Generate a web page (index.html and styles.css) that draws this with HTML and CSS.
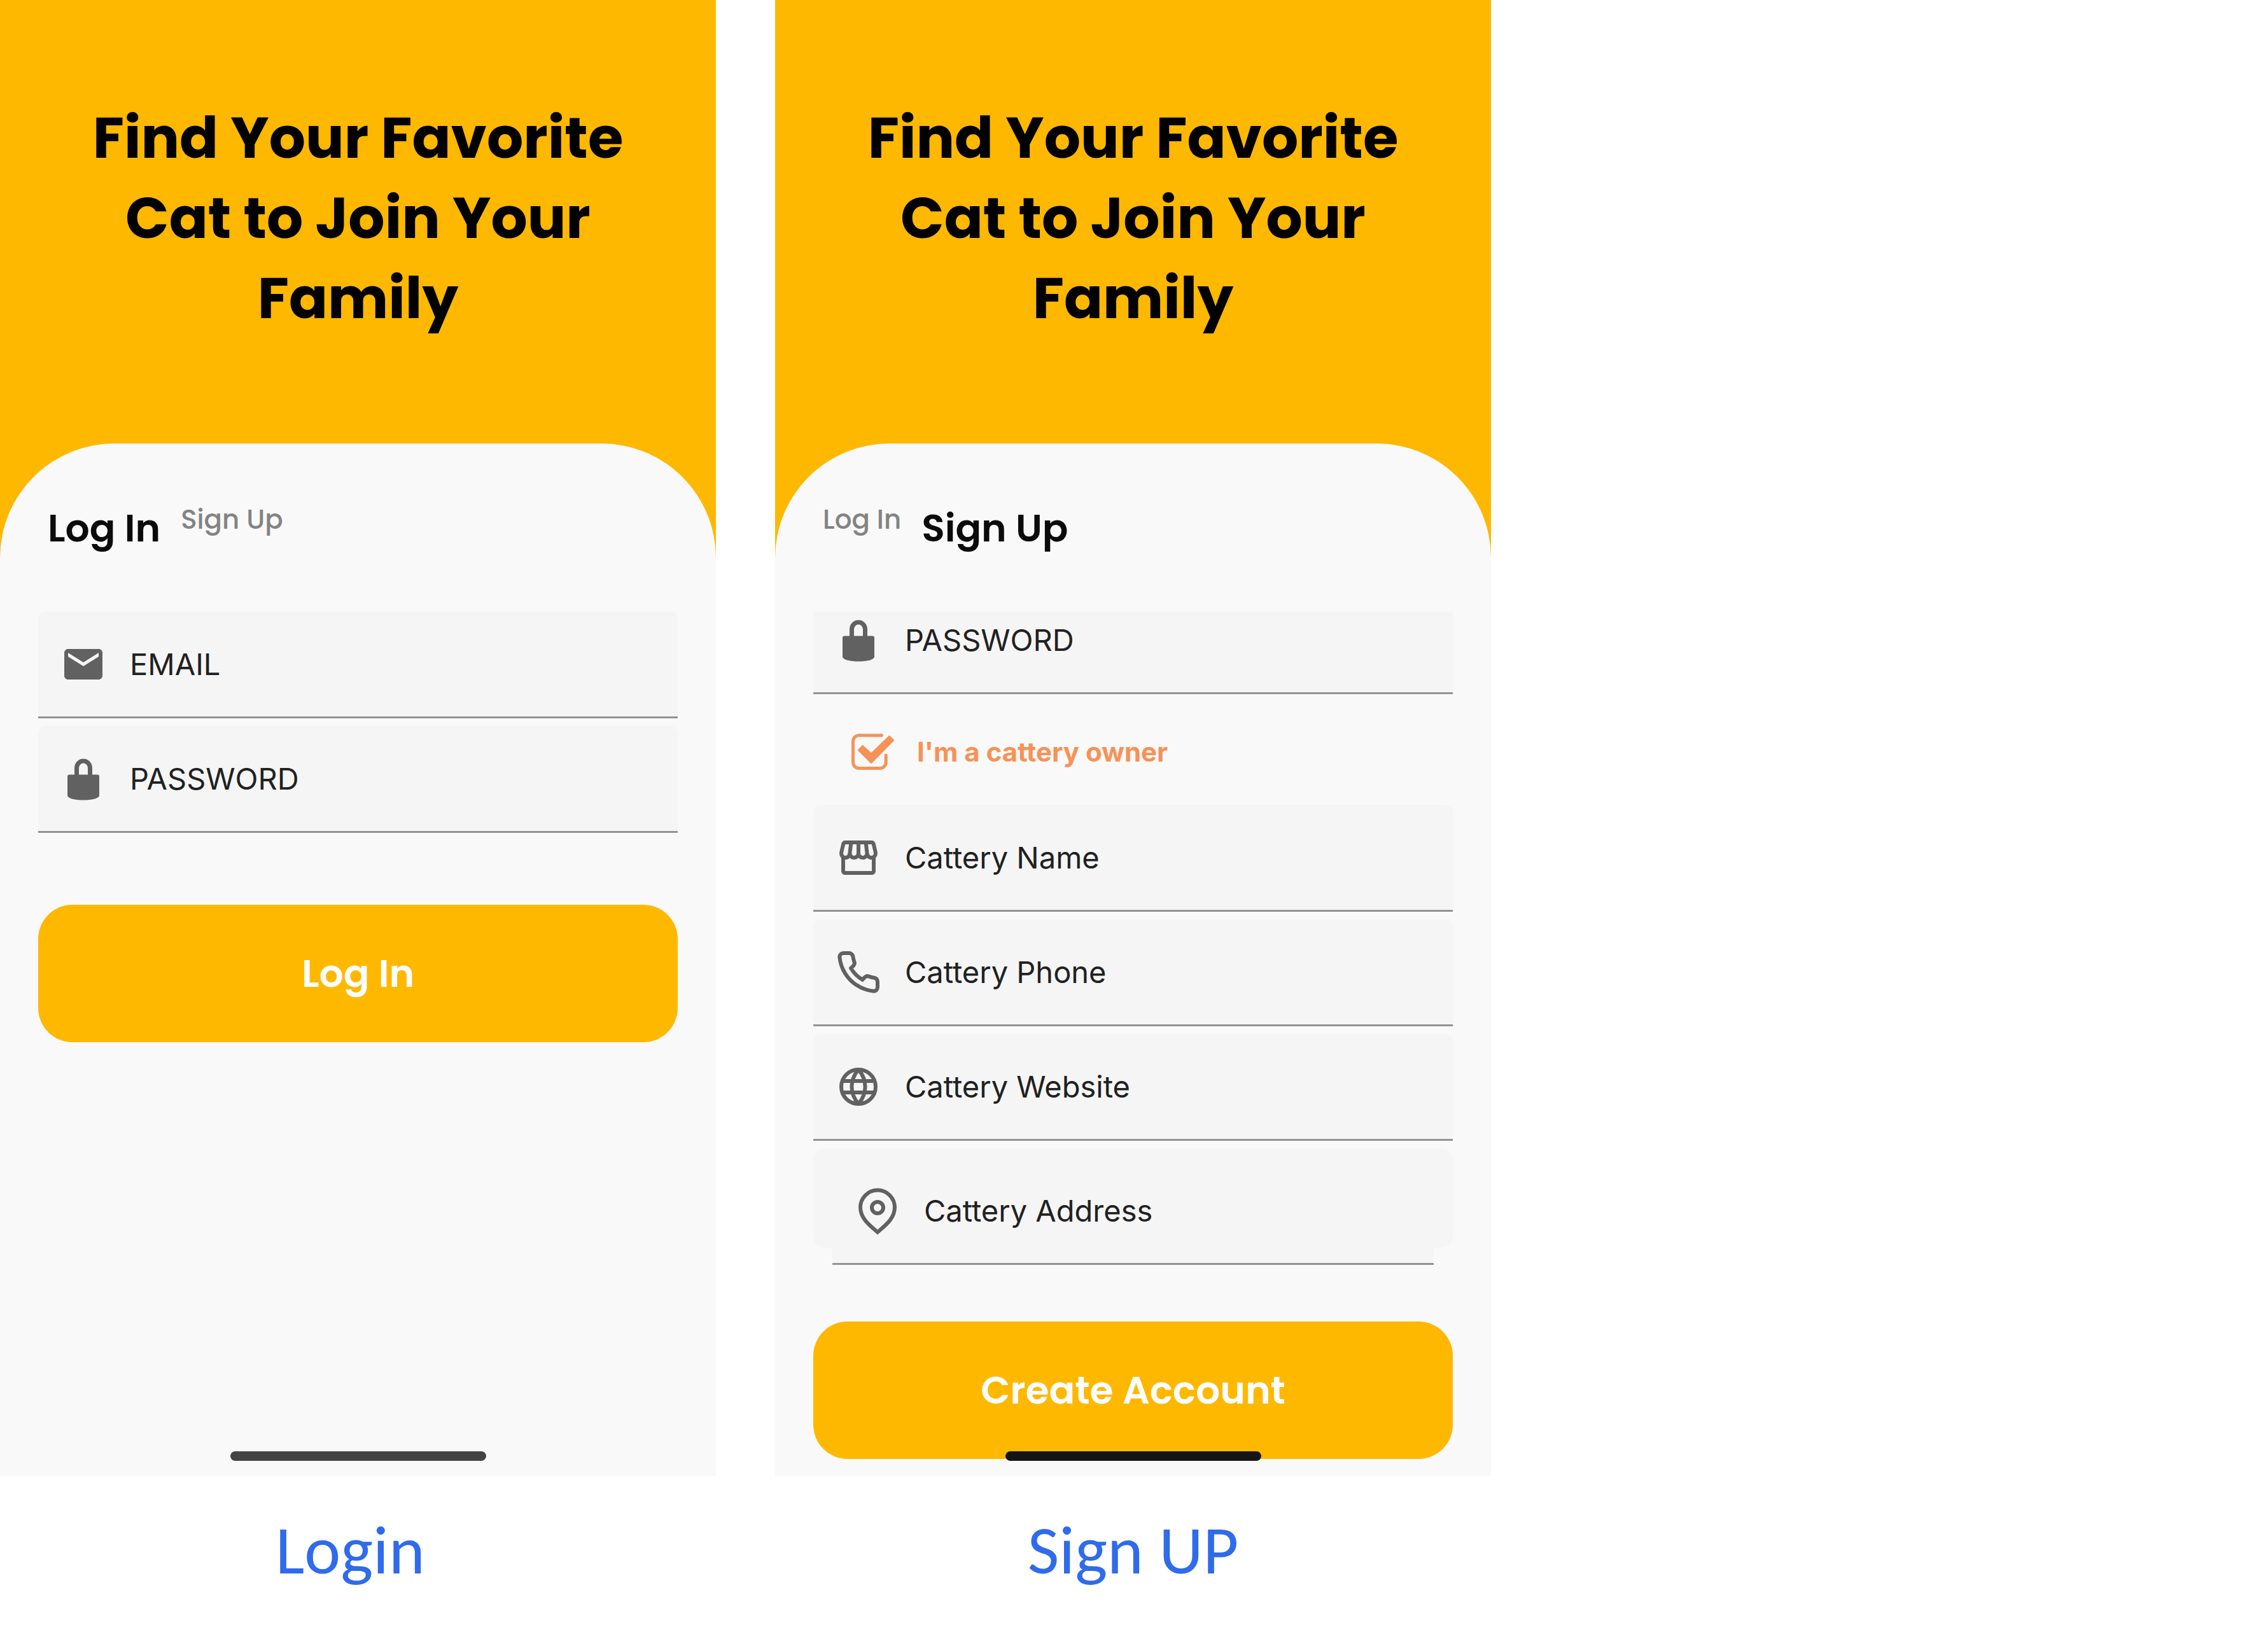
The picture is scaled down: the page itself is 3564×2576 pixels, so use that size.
FILE: index.html
```html
<!DOCTYPE html>
<html lang="en">
<head>
<meta charset="utf-8">
<meta name="viewport" content="width=device-width, initial-scale=1">
<title>Cattery - Login and Sign Up</title>
<link rel="stylesheet" href="styles.css">
</head>
<body>
<svg class="sprite" aria-hidden="true">
  <symbol id="icon-lock" viewBox="0 0 72 72">
    <path d="M25.500 32V19a10.500 11 0 0 1 21 0v13" fill="none" stroke="currentColor" stroke-width="7"/>
    <path d="M14 29.500h44a3 3 0 0 1 3 3V62c0 5-12 7.500-25 7.500S11 67 11 62V32.500a3 3 0 0 1 3-3z" fill="currentColor"/>
  </symbol>
</svg>
<main class="board">
  <figure class="screen">
    <section class="phone" aria-label="Login screen">
      <h1 class="hero">Find Your Favorite Cat to Join Your Family</h1>
      <div class="card">
        <nav class="tabs">
          <a class="tab tab-active" href="#login">Log In</a>
          <a class="tab" href="#signup">Sign Up</a>
        </nav>
        <form class="form">
          <div class="fields">
            <label class="field" aria-label="Email">
              <svg class="icon" viewBox="0 0 24 24" aria-hidden="true"><path fill="currentColor" d="M20 4H4c-1.100 0-2 .9-2 2v12c0 1.100.9 2 2 2h16c1.100 0 2-.9 2-2V6c0-1.100-.9-2-2-2zm0 4l-8 5-8-5V6l8 5 8-5v2z"/></svg>
              <input class="input" type="email" placeholder="EMAIL">
            </label>
            <label class="field" aria-label="Password">
              <svg class="icon" aria-hidden="true"><use href="#icon-lock"/></svg>
              <input class="input" type="password" placeholder="PASSWORD">
            </label>
          </div>
          <button class="submit" type="button">Log In</button>
        </form>
      </div>
      <span class="home-bar"></span>
    </section>
    <figcaption class="caption">Login </figcaption>
  </figure>

  <figure class="screen">
    <section class="phone" aria-label="Sign up screen">
      <h1 class="hero">Find Your Favorite Cat to Join Your Family</h1>
      <div class="card">
        <nav class="tabs">
          <a class="tab" href="#login">Log In</a>
          <a class="tab tab-active" href="#signup">Sign Up</a>
        </nav>
        <form class="form">
          <div class="fields fields-scrolled">
            <label class="field" aria-label="Password">
              <svg class="icon" aria-hidden="true"><use href="#icon-lock"/></svg>
              <input class="input" type="password" placeholder="PASSWORD">
            </label>
            <label class="owner">
              <span class="check">
                <input class="check-input" type="checkbox" checked>
                <svg class="check-mark" viewBox="0 0 72 60" aria-hidden="true">
                  <path d="M48.500 3.800H13a9.500 9.500 0 0 0-9.500 9.500v32.700a9.500 9.500 0 0 0 9.500 9.500h32.700a9.500 9.500 0 0 0 9.500-9.500V35" fill="none" stroke="currentColor" stroke-width="5" stroke-linecap="round"/>
                  <path d="M12.500 27l6-6.500L32 33 60.500 5.500l6 6L32 46.500z" fill="currentColor" stroke="currentColor" stroke-width="3" stroke-linejoin="round"/>
                </svg>
              </span>
              <span>I'm a cattery owner</span>
            </label>
            <label class="field" aria-label="Cattery Name">
              <svg class="icon" viewBox="0 0 24 24" aria-hidden="true"><path fill="currentColor" d="M21.900 8.890l-1.050-4.370c-.22-.9-1-1.520-1.910-1.520H5.050c-.9 0-1.690.63-1.900 1.520L2.100 8.890c-.24 1.020-.02 2.060.62 2.880.08.11.19.19.28.29V19c0 1.100.9 2 2 2h14c1.100 0 2-.9 2-2v-6.940c.09-.09.2-.18.28-.28.64-.82.87-1.870.62-2.890zm-2.990-3.900l1.050 4.370c.1.42.01.84-.25 1.170-.14.18-.44.47-.94.47-.61 0-1.140-.49-1.210-1.140L16.980 5l1.930-.01zM13 5h1.960l.54 4.520c.05.39-.07.78-.33 1.070-.22.26-.54.41-.95.41-.67 0-1.220-.59-1.220-1.310V5zM8.490 9.520L9.040 5H11v4.690c0 .72-.55 1.310-1.290 1.310-.34 0-.65-.15-.89-.41-.25-.29-.37-.68-.33-1.070zm-4.450-.16L5.050 5h1.970l-.58 4.860c-.08.65-.6 1.140-1.210 1.140-.49 0-.8-.29-.93-.47-.27-.32-.36-.75-.26-1.170zM5 19v-6.030c.08.01.15.03.23.03.87 0 1.660-.36 2.240-.95.6.6 1.400.95 2.310.95.87 0 1.650-.36 2.230-.93.59.57 1.390.93 2.290.93.84 0 1.640-.35 2.240-.95.58.59 1.370.95 2.240.95.08 0 .15-.02.23-.03V19H5z"/></svg>
              <input class="input" type="text" placeholder="Cattery Name">
            </label>
            <label class="field" aria-label="Cattery Phone">
              <svg class="icon" viewBox="0 0 24 24" aria-hidden="true"><path class="line" d="M22 16.920v3a2 2 0 0 1-2.180 2 19.790 19.790 0 0 1-8.630-3.070 19.500 19.500 0 0 1-6-6 19.790 19.790 0 0 1-3.070-8.670A2 2 0 0 1 4.110 2h3a2 2 0 0 1 2 1.720 12.840 12.840 0 0 0 .7 2.810 2 2 0 0 1-.45 2.110L8.090 9.910a16 16 0 0 0 6 6l1.270-1.270a2 2 0 0 1 2.110-.45 12.840 12.840 0 0 0 2.810.7A2 2 0 0 1 22 16.920z"/></svg>
              <input class="input" type="tel" placeholder="Cattery Phone">
            </label>
            <label class="field" aria-label="Cattery Website">
              <svg class="icon" viewBox="0 0 24 24" aria-hidden="true"><g class="line"><circle cx="12" cy="12" r="9"/><path d="M12 3c-4.700 5.500-4.700 12.500 0 18M12 3c4.700 5.500 4.700 12.500 0 18M3.600 9h16.800M3.600 15h16.800"/></g></svg>
              <input class="input" type="url" placeholder="Cattery Website">
            </label>
          </div>
          <div class="address">
            <label class="field" aria-label="Cattery Address">
              <svg class="icon" viewBox="0 0 24 24" aria-hidden="true"><g class="line"><path d="M21 10.200c0 5.800-4.800 9.300-9 13-4.200-3.700-9-7.200-9-13a9 9 0 0 1 18 0z"/><circle cx="12" cy="10.300" r="3"/></g></svg>
              <input class="input" type="text" placeholder="Cattery Address">
            </label>
          </div>
          <button class="submit" type="button">Create Account</button>
        </form>
      </div>
      <span class="home-bar home-bar-dark"></span>
    </section>
    <figcaption class="caption">Sign UP</figcaption>
  </figure>
</main>
</body>
</html>
```

FILE: styles.css
```css
:root {
  --amber: #ffb800;
  --surface: #f9f9f9;
  --field: #f5f5f5;
  --rule: #939393;
  --icon: #616161;
  --ink: #0b0b0c;
}

* {
  box-sizing: border-box;
}

body {
  margin: 0;
  background: #fff;
  font-family: Inter, "Liberation Sans", sans-serif;
}

.sprite {
  display: none;
}

.board {
  display: grid;
  grid-template-columns: 1125fr 1125fr 1128fr;
  column-gap: 93px;
}

.screen {
  display: flex;
  flex-direction: column;
  margin: 0;
}

.phone {
  position: relative;
  flex: 1;
  display: flex;
  flex-direction: column;
  background: var(--amber);
  font-family: Poppins, Inter, sans-serif;
}

.hero {
  margin: 0;
  padding: 154px 120px 165px;
  color: #000;
  font-size: 90px;
  font-weight: 700;
  line-height: 126px;
  text-align: center;
}

.card {
  flex: 1;
  padding: 88px 60px 27px;
  border-radius: 180px 180px 0 0;
  background: var(--surface);
}

.tabs {
  display: flex;
  align-items: flex-start;
  gap: 32px;
  padding: 0 15px;
  margin-bottom: 86px;
}

.tab {
  color: #838383;
  font-size: 42px;
  font-weight: 500;
  line-height: 63px;
  text-decoration: none;
}

.tab-active {
  color: var(--ink);
  font-size: 60px;
  font-weight: 600;
  line-height: 90px;
}

.form {
  display: flex;
  flex-direction: column;
}

.fields {
  display: flex;
  flex-direction: column;
  gap: 12px;
  margin-bottom: 113px;
  overflow: hidden;
}

/* list scrolled up so that its first row is partly hidden */
.fields-scrolled {
  margin-bottom: 12px;
}

.fields-scrolled > :first-child {
  margin-top: -38px;
}

.field {
  display: flex;
  align-items: center;
  gap: 37px;
  height: 168px;
  padding: 0 35px;
  border-bottom: 3px solid var(--rule);
  border-radius: 12px 12px 0 0;
  background: var(--field);
}

.icon {
  flex: none;
  width: 72px;
  height: 72px;
  overflow: visible;
  color: var(--icon);
}

.line {
  fill: none;
  stroke: currentColor;
  stroke-width: 2;
}

.input {
  flex: 1;
  min-width: 0;
  padding: 0;
  border: 0;
  outline: 0;
  background: none;
  color: #212121;
  font-family: Inter, sans-serif;
  font-size: 47px;
  line-height: 60px;
}

.input::placeholder {
  color: #212121;
  opacity: 1;
}

.owner {
  display: flex;
  align-items: center;
  gap: 32px;
  height: 150px;
  padding: 8px 59px 0;
  color: #f79256;
  font-family: Inter, sans-serif;
  font-size: 42px;
  font-weight: 700;
  line-height: 60px;
}

.check {
  position: relative;
  display: flex;
}

.check-input {
  position: absolute;
  inset: 0;
  margin: 0;
  opacity: 0;
}

.check-mark {
  width: 72px;
  height: 60px;
}

.address {
  height: 156px;
  margin-bottom: 116px;
  padding: 15px 30px 0;
  border-radius: 18px;
  background: var(--field);
}

.submit {
  padding: 63px 30px;
  border: 0;
  border-radius: 54px;
  background: var(--amber);
  color: #fff;
  font: inherit;
  font-size: 60px;
  font-weight: 600;
  line-height: 90px;
}

.home-bar {
  position: absolute;
  bottom: 24px;
  left: 50%;
  width: 402px;
  height: 15px;
  border-radius: 8px;
  background: #444;
  transform: translateX(-50%);
}

.home-bar-dark {
  background: #151515;
}

.caption {
  padding: 56px 0 60px;
  color: #2f6bea;
  font-family: Calibri, Carlito, Lato, sans-serif;
  font-size: 108px;
  line-height: 120px;
  text-align: center;
  white-space: pre;
}
```
